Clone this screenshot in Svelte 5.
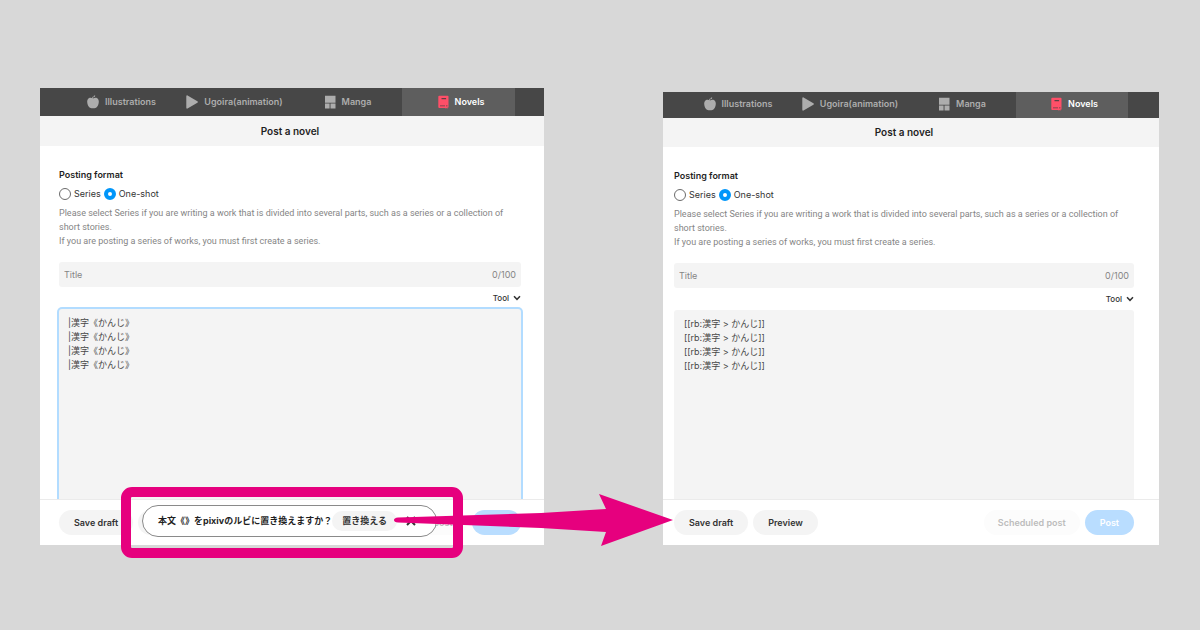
<script>
  const tabs = [
    { name: 'Illustrations', icon: 'apple' },
    { name: 'Ugoira(animation)', icon: 'play' },
    { name: 'Manga', icon: 'panels' },
    { name: 'Novels', icon: 'book', active: true },
  ];

  const panels = [
    {
      id: 'before',
      format: 'one-shot',
      text: Array(4).fill('|漢字《かんじ》').join('\n'),
      prompt: true,
    },
    {
      id: 'after',
      format: 'one-shot',
      text: Array(4).fill('[[rb:漢字 > かんじ]]').join('\n'),
      prompt: false,
    },
  ];
</script>

<main class="scene">
  {#each panels as panel}
    <section class="panel {panel.id}">
      <nav class="tabs">
        {#each tabs as tab}
          <a href="#{tab.icon}" class="tab" class:active={tab.active}>
            <svg class="tab-icon" viewBox="0 0 12 14" aria-hidden="true">
              {#if tab.icon === 'apple'}
                <path d="M6.200 3.400C7.500 2.600 9 2.500 10.200 3.200c1.300.8 1.700 2.300 1.600 3.900-.1 2.500-1.200 4.700-2.700 5.700-.9.600-1.700.4-3.100.4s-2.200.2-3.100-.4C1.400 11.800.3 9.600.2 7.100.1 5.500.5 4 1.800 3.200 3 2.500 4.500 2.600 5.600 3.300L5.100 2l.9-.2z" />
                <path d="M6.400 2.400C6.300 1.200 7 .5 8.200.6 8.200 1.700 7.500 2.400 6.400 2.400z" />
              {:else if tab.icon === 'play'}
                <path d="M.3 1.200C.3.500.9.100 1.500.4l9.900 5.800c.6.300.6 1.200 0 1.500l-9.900 5.900c-.6.300-1.200-.1-1.200-.8z" />
              {:else if tab.icon === 'panels'}
                <path d="M1 .7h10.500v7H1zM1 8.600h4.600v4.800H1zM6.500 8.600h5v4.800h-5z" />
              {:else}
                <path class="cover" d="M2.300.7h8.400q.8 0 .8.800v11h-1v1.300l-1-.7-1 .7v-.8H2.300q-1 0-1-1v-10.300q0-1 1-1z" />
                <path class="mark" d="M4.500 3h4.600v1.200H4.500zM3 10.400h5v.9H3zM9 10.400h1.500v.9H9z" />
              {/if}
            </svg>
            <span>{tab.name}</span>
          </a>
        {/each}
      </nav>

      <h1>Post a novel</h1>

      <div class="body">
        <fieldset>
          <legend>Posting format</legend>
          <div class="radios">
            <label>
              <input type="radio" name="format-{panel.id}" value="series" checked={panel.format === 'series'} />
              <span>Series</span>
            </label>
            <label>
              <input type="radio" name="format-{panel.id}" value="one-shot" checked={panel.format === 'one-shot'} />
              <span>One-shot</span>
            </label>
          </div>
        </fieldset>
        <p class="help">
          Please select Series if you are writing a work that is divided into several parts, such as a series or a collection of short stories.<br />
          If you are posting a series of works, you must first create a series.
        </p>
        <div class="title-field">
          <input type="text" placeholder="Title" aria-label="Title" maxlength="100" />
          <span>0/100</span>
        </div>
        <button class="tool">
          <span>Tool</span>
          <svg viewBox="0 0 8 6" aria-hidden="true"><path d="M1 1.200 4 4.300 7 1.200" /></svg>
        </button>
        <textarea aria-label="Text" class:focused={panel.prompt} value={panel.text}></textarea>
      </div>

      <footer>
        <button class="pill">Save draft</button>
        <button class="pill">Preview</button>
        <button class="pill scheduled">Scheduled post</button>
        <button class="pill post">Post</button>

        {#if panel.prompt}
          <div class="prompt">
            <strong>本文《》をpixivのルビに置き換えますか？</strong>
            <button class="replace">置き換える</button>
            <button class="close" aria-label="Close">
              <svg viewBox="0 0 10 10"><path d="M1 1l8 8M9 1 1 9" /></svg>
            </button>
          </div>
          <div class="highlight"></div>
          <svg class="arrow" viewBox="0 0 280 54" aria-hidden="true">
            <path d="M4 24.500 147 20 212 16 205 1l74 26-72 26 5-14-65-4L4 29.500Q0 29 0 27t4-2.500z" />
          </svg>
        {/if}
      </footer>
    </section>
  {/each}
</main>

<style>
  :global(body) {
    margin: 0;
    background: #d8d8d8;
  }
  .scene {
    display: flex;
    align-items: flex-end;
    gap: 119px;
    padding: 88px 41px 85px 40px;
    font-family: Inter, "Noto Sans CJK JP", sans-serif;
    font-size: 9px;
    line-height: 14px;
    color: #333;
  }
  button, input, textarea {
    font: inherit;
    color: inherit;
    border: none;
    margin: 0;
    padding: 0;
    background: none;
    box-sizing: border-box;
  }
  .panel {
    --left: 19px;
    --right: 23px;
    --tab: 113px;
    flex: 504 1 0;
    min-width: 0;
    background: #fff;
  }
  .panel.before {
    position: relative;
    z-index: 1;
  }
  .panel.after {
    --left: 11px;
    --right: 25px;
    --tab: 112px;
    flex-grow: 496;
  }

  .tabs {
    display: flex;
    justify-content: center;
    height: 28px;
    padding: 0 25px 0 19px;
    background: #474747;
  }
  .after .tabs {
    height: 26px;
    padding: 0 25px 0 11px;
  }
  .tab {
    flex: 0 1 var(--tab);
    display: flex;
    align-items: center;
    justify-content: center;
    gap: 6px;
    padding-left: 4px;
    box-sizing: border-box;
    color: #adadad;
    font-weight: 600;
    text-decoration: none;
  }
  .after .tab {
    padding-bottom: 2px;
  }
  .tab.active {
    background: #5e5e5e;
    color: #fff;
  }
  .tab-icon {
    width: 12px;
    height: 14px;
    fill: #adadad;
  }
  .cover {
    fill: #ff4f68;
  }
  .mark {
    fill: #5e4045;
  }

  h1 {
    margin: 0;
    padding: 0 var(--right) 0 var(--left);
    background: #f4f4f4;
    color: #1f1f1f;
    font-size: 10px;
    font-weight: 600;
    line-height: 30px;
    text-align: center;
  }
  .after h1 {
    line-height: 29px;
  }

  .body {
    display: flex;
    flex-direction: column;
    height: 353px;
    padding: 22px var(--right) 0 var(--left);
    box-sizing: border-box;
    overflow: hidden;
  }
  .after .body {
    height: 352px;
  }
  fieldset {
    margin: 0;
    padding: 0;
    border: none;
  }
  legend {
    padding: 0;
    color: #1f1f1f;
    font-weight: 600;
  }
  .radios {
    display: flex;
    gap: 3px;
    margin: 5px 0;
  }
  .radios label {
    display: flex;
    align-items: center;
    gap: 3px;
    height: 14px;
  }
  .radios input {
    appearance: none;
    width: 12px;
    height: 12px;
    border: 1px solid #6b6b6b;
    border-radius: 50%;
    background: #fff;
  }
  .radios input:checked {
    border: 4px solid #0096fa;
  }
  .help {
    margin: 0 0 14px;
    color: #858585;
    font-family: Roboto, sans-serif;
  }
  .title-field {
    display: flex;
    align-items: center;
    flex: none;
    height: 25px;
    padding: 0 5px;
    border-radius: 3px;
    background: #f4f4f4;
    color: #858585;
  }
  .title-field input {
    flex: 1;
    min-width: 0;
  }
  .title-field input::placeholder {
    color: #858585;
    opacity: 1;
  }
  .tool {
    display: flex;
    align-items: center;
    align-self: flex-end;
    gap: 4px;
    margin: 4px 0;
    font-size: 8px;
    font-weight: 500;
  }
  .tool svg {
    width: 8px;
    height: 6px;
    fill: none;
    stroke: #333;
    stroke-width: 1.5;
  }
  textarea {
    flex: 1;
    width: 100%;
    padding: 7px 10px;
    border-radius: 3px 3px 0 0;
    background: #f4f4f4;
    color: #474747;
    outline: none;
    resize: none;
  }
  .before textarea {
    padding-left: 9px;
  }
  textarea.focused {
    box-shadow: 0 0 0 2px #b2dcff;
  }

  footer {
    position: relative;
    display: flex;
    align-items: center;
    gap: 5px;
    height: 46px;
    padding: 0 var(--right) 0 var(--left);
    border-top: 1px solid #ebebeb;
    box-sizing: border-box;
  }
  .pill {
    height: 25px;
    padding: 0 15px;
    border-radius: 13px;
    background: #f4f4f4;
    font-weight: 600;
    white-space: nowrap;
  }
  .scheduled {
    margin-left: auto;
    padding: 0 14px;
    background: #fcfcfc;
    color: #bdbdbd;
  }
  .post {
    background: #b9ddff;
    color: #fff;
  }

  .prompt {
    position: absolute;
    left: 102px;
    bottom: 8px;
    display: flex;
    align-items: center;
    width: 295px;
    height: 32px;
    padding: 0 20px 0 15px;
    border: 1px solid #8a8a8a;
    border-radius: 16px;
    background: #fff;
    box-sizing: border-box;
    white-space: nowrap;
  }
  .prompt strong {
    color: #1f1f1f;
    font-weight: 700;
  }
  .replace {
    height: 20px;
    padding: 0 10px;
    border-radius: 10px;
    background: #f4f4f4;
    font-weight: 600;
  }
  .close {
    display: flex;
    margin-left: auto;
  }
  .close svg {
    width: 10px;
    height: 10px;
    stroke: #333;
    stroke-width: 2;
  }
  .highlight {
    position: absolute;
    left: 81px;
    bottom: -13px;
    width: 342px;
    height: 71px;
    border: 10px solid #e6007e;
    border-radius: 11px;
    box-sizing: border-box;
  }
  .arrow {
    position: absolute;
    left: 354px;
    bottom: -2px;
    width: 280px;
    height: 54px;
    fill: #e6007e;
  }
</style>
